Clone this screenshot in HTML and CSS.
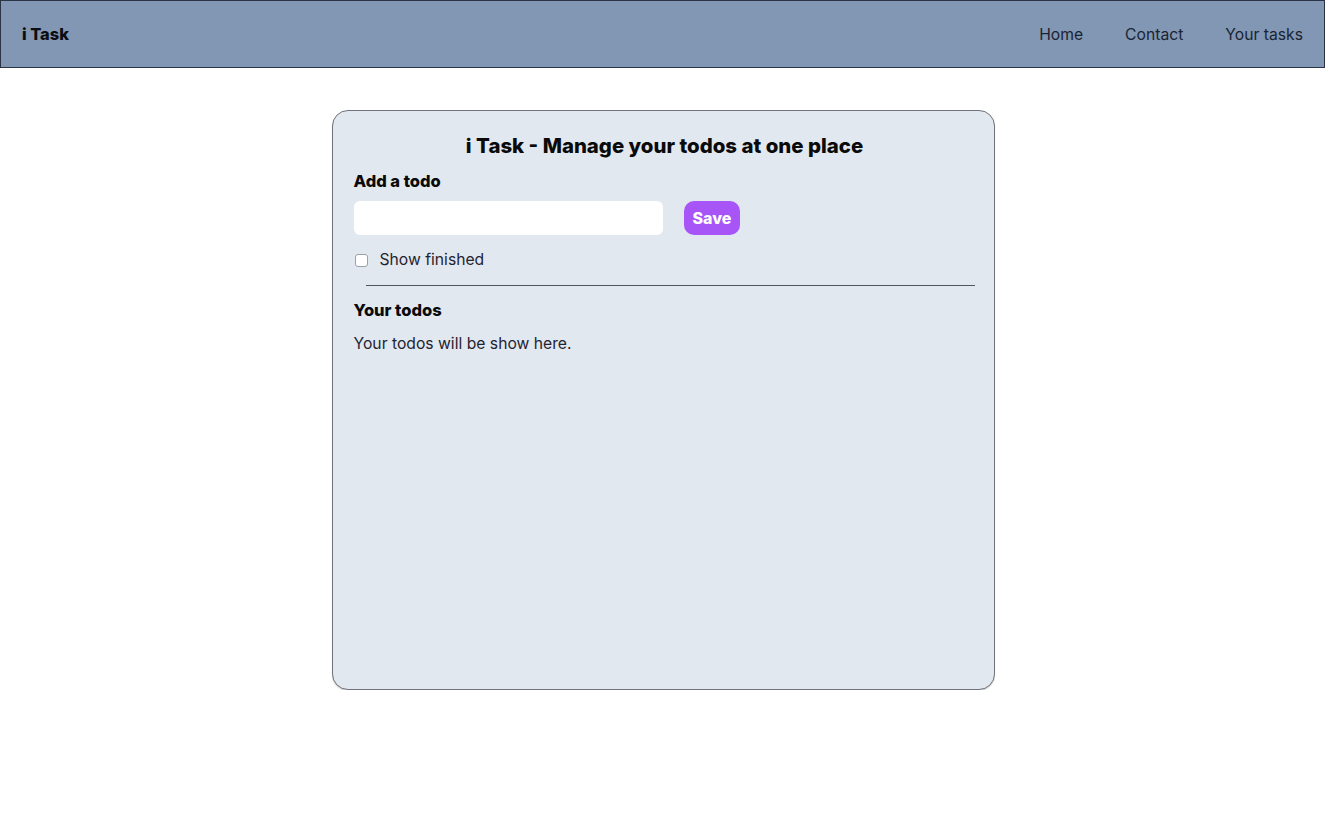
FILE: index.html
```html
<!DOCTYPE html>
<html>
<head>
<meta charset="utf-8">
<link rel="stylesheet" href="styles.css">
</head>
<body>
<nav class="nav">
  <div class="logo">i Task</div>
  <ul class="links">
    <li>Home</li>
    <li>Contact</li>
    <li>Your tasks</li>
  </ul>
</nav>
<main class="card">
  <h1 class="title">i Task - Manage your todos at one place</h1>
  <div class="add">
    <h2 class="heading">Add a todo</h2>
    <div class="add-row">
      <input class="input" type="text">
      <button class="save">Save</button>
    </div>
  </div>
  <label class="show"><input type="checkbox" class="check"> <span>Show finished</span></label>
  <div class="divider"></div>
  <h2 class="heading todos-heading">Your todos</h2>
  <p class="empty">Your todos will be show here.</p>
</main>
</body>
</html>
```

FILE: styles.css
```css
* { box-sizing: border-box; }
body {
  margin: 0;
  font-family: Inter, "Noto Sans", sans-serif;
  background: #fff;
  color: #111;
}
.nav {
  display: flex;
  justify-content: space-between;
  align-items: center;
  height: 68px;
  margin-right: 1px;
  background: #8197b3;
  border: 1px solid #2a3444;
  padding: 0 21px 0 21px;
}
.logo {
  font-weight: 800;
  font-size: 16.4px;
  color: #0b0d12;
}
.links {
  list-style: none;
  display: flex;
  gap: 42px;
  margin: 0;
  padding: 0;
  font-size: 15.7px;
  color: #1b2333;
}
.card {
  width: 663px;
  height: 580px;
  margin: 42px auto 0;
  background: #e2e8f0;
  border: 1px solid #70737a;
  border-radius: 16px;
  box-shadow: 0 1px 1px rgba(0, 0, 0, 0.18);
  padding: 21px 18px 21px 21px;
}
.title {
  margin: 0;
  text-align: center;
  font-size: 20.4px;
  line-height: 28px;
  font-weight: 800;
  color: #0a0a0a;
}
.heading {
  margin: 0;
  font-size: 16.5px;
  line-height: 24px;
  font-weight: 800;
  color: #0a0a0a;
}
.add .heading { margin-top: 9px; }
.add-row {
  display: flex;
  align-items: center;
  gap: 21px;
  margin-top: 8px;
}
.input {
  width: 309px;
  height: 34px;
  border: none;
  border-radius: 6px;
  background: #fff;
  padding: 0 8px;
  font: inherit;
}
.save {
  height: 34px;
  padding: 0 9px;
  border: none;
  border-radius: 10px;
  background: #a855f7;
  color: #fff;
  font: 800 16px Inter, sans-serif;
}
.show {
  display: flex;
  align-items: center;
  gap: 12px;
  margin-top: 13px;
  font-size: 15.7px;
  line-height: 24px;
  color: #1f2430;
}
.check {
  appearance: none;
  -webkit-appearance: none;
  margin: 0 0 0 1px;
  width: 13px;
  height: 13px;
  background: #fff;
  border: 1px solid #9aa0a8;
  border-radius: 3px;
}
.divider {
  height: 1px;
  background: #50555f;
  margin: 13px 0 0 12px;
  width: 609px;
}
.todos-heading { margin-top: 12px; }
.empty {
  margin: 10px 0 0;
  font-size: 15.7px;
  line-height: 24px;
  color: #1f2430;
}
```
